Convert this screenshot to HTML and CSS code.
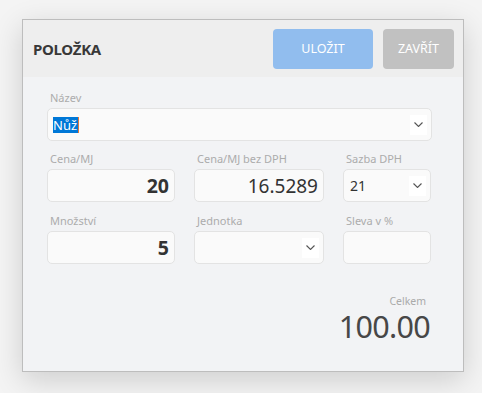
FILE: index.html
```html
<!DOCTYPE html>
<html lang="cs">
<head>
<meta charset="utf-8">
<title>Položka</title>
<link rel="stylesheet" href="styles.css">
</head>
<body>
<div class="dialog">
  <div class="header">
    <div class="title">POLOŽKA</div>
    <div class="actions">
      <button class="btn btn-save">ULOŽIT</button>
      <button class="btn btn-close">ZAVŘÍT</button>
    </div>
  </div>
  <div class="content">
    <div class="field field-wide">
      <div class="label">Název</div>
      <div class="control select">
        <span class="value"><span class="sel">Nůž</span><span class="caret"></span></span>
        <span class="chev"><svg width="9" height="5" viewBox="0 0 9 5"><polyline points="0.5,0.5 4.5,4.5 8.5,0.5" fill="none" stroke="#555" stroke-width="1.1"/></svg></span>
      </div>
    </div>
    <div class="grid">
      <div class="field">
        <div class="label">Cena/MJ</div>
        <div class="control num bold">20</div>
      </div>
      <div class="field">
        <div class="label">Cena/MJ bez DPH</div>
        <div class="control num">16.5289</div>
      </div>
      <div class="field">
        <div class="label">Sazba DPH</div>
        <div class="control select small">
          <span class="value">21</span>
          <span class="chev"><svg width="9" height="5" viewBox="0 0 9 5"><polyline points="0.5,0.5 4.5,4.5 8.5,0.5" fill="none" stroke="#555" stroke-width="1.1"/></svg></span>
        </div>
      </div>
      <div class="field">
        <div class="label">Množství</div>
        <div class="control num bold">5</div>
      </div>
      <div class="field">
        <div class="label">Jednotka</div>
        <div class="control select">
          <span class="value"></span>
          <span class="chev"><svg width="9" height="5" viewBox="0 0 9 5"><polyline points="0.5,0.5 4.5,4.5 8.5,0.5" fill="none" stroke="#555" stroke-width="1.1"/></svg></span>
        </div>
      </div>
      <div class="field">
        <div class="label">Sleva v %</div>
        <div class="control"></div>
      </div>
    </div>
    <div class="total">
      <div class="total-label">Celkem</div>
      <div class="total-value">100.00</div>
    </div>
  </div>
</div>
</body>
</html>
```
FILE: styles.css
```css
html, body {
  margin: 0;
  padding: 0;
}
body {
  background: #f4f4f4;
  font-family: "Noto Sans", "Open Sans", sans-serif;
  color: #333;
  padding: 19px 0 0 22px;
  height: 393px;
  box-sizing: border-box;
  overflow: hidden;
}
.dialog {
  width: 442px;
  height: 353px;
  box-sizing: border-box;
  border: 1px solid #bdbdbd;
  background: #f2f3f5;
  box-shadow: 0 8px 28px rgba(0, 0, 0, 0.16);
  display: flex;
  flex-direction: column;
}
.header {
  height: 57px;
  background: #eeeeee;
  display: flex;
  align-items: center;
  justify-content: space-between;
  padding: 0 9px 0 10px;
  flex: none;
}
.title {
  font-size: 15px;
  font-weight: 700;
  color: #383838;
  letter-spacing: -0.3px;
  padding-top: 1px;
}
.actions {
  display: flex;
  gap: 10px;
}
.btn {
  border: none;
  height: 40px;
  border-radius: 4px;
  color: #fff;
  font-family: inherit;
  font-size: 12.5px;
  padding: 0;
  cursor: pointer;
}
.btn-save {
  width: 100px;
  background: #91bdee;
}
.btn-close {
  width: 71px;
  background: #c1c1c1;
}
.content {
  padding: 13px 31px 0 24px;
  display: flex;
  flex-direction: column;
  gap: 10px;
}
.label {
  font-size: 11px;
  line-height: 16px;
  height: 16px;
  color: #acacac;
  padding-left: 3px;
  margin-bottom: 2px;
}
.control {
  height: 33px;
  box-sizing: border-box;
  border: 1px solid #e3e3e3;
  border-radius: 5px;
  background: #fafafa;
  display: flex;
  align-items: center;
  padding: 0 5px;
}
.grid {
  display: grid;
  grid-template-columns: 128px 130px 88px;
  column-gap: 19px;
  row-gap: 11px;
}
.num {
  justify-content: flex-end;
  font-size: 19px;
  color: #333;
}
.bold {
  font-weight: 700;
  font-size: 19.5px;
}
.select {
  justify-content: space-between;
  padding-right: 4px;
}
.select .value {
  font-size: 13px;
  display: flex;
  align-items: center;
}
.select.small .value {
  font-size: 14px;
  padding-left: 1px;
}
.sel {
  background: #0078d7;
  color: #fff;
  line-height: 16px;
  padding: 0 1px 0 0;
}
.caret {
  width: 1px;
  height: 16px;
  background: #e0783c;
}
.chev {
  width: 17px;
  height: 20px;
  background: #fff;
  display: flex;
  align-items: center;
  justify-content: center;
}
.total {
  margin-top: 21px;
  display: flex;
  flex-direction: column;
  align-items: flex-end;
  padding-right: 1px;
}
.total-label {
  font-size: 10.5px;
  color: #aaa;
  line-height: 12px;
  padding-right: 5px;
}
.total-value {
  font-size: 30.5px;
  line-height: 30px;
  margin-top: 4px;
  margin-right: 1px;
  color: #474747;
  letter-spacing: -0.7px;
}
```
